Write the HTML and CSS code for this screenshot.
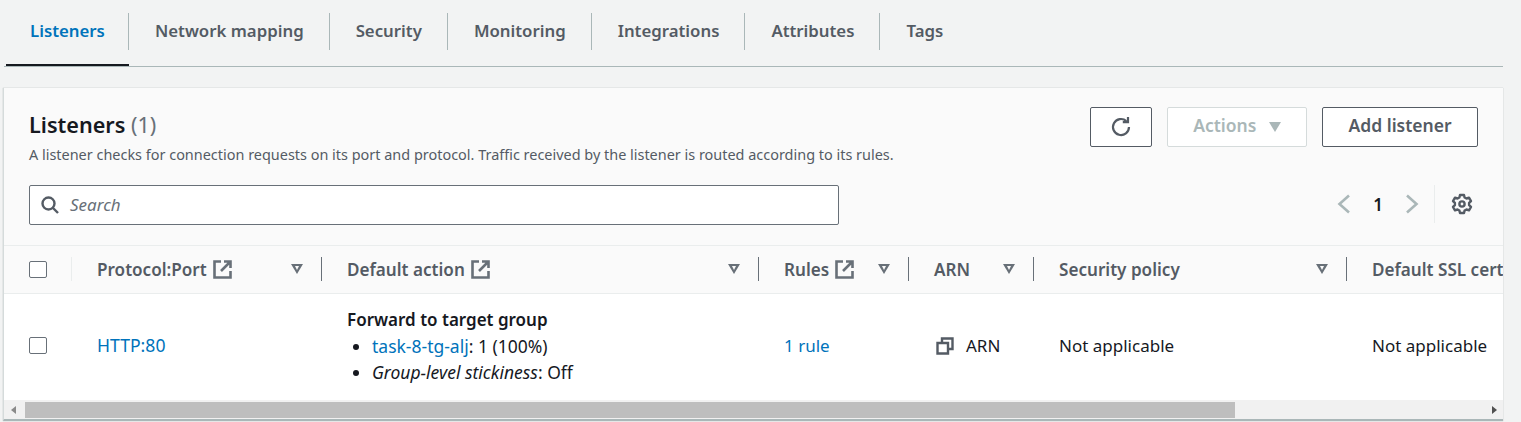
FILE: index.html
```html
<!DOCTYPE html>
<html lang="en">
<head>
    <meta charset="UTF-8">
    <title>Listeners</title>
    <link rel="stylesheet" href="styles.css">
</head>
<body>
    <!-- tabs -->
    <nav class="tabs">
        <a class="tab tab-active">Listeners</a>
        <a class="tab">Network mapping</a>
        <a class="tab">Security</a>
        <a class="tab">Monitoring</a>
        <a class="tab">Integrations</a>
        <a class="tab">Attributes</a>
        <a class="tab tab-last">Tags</a>
    </nav>

    <section class="panel">
        <header class="panel-head">
            <div class="panel-title">
                <h2>Listeners <span class="count">(1)</span></h2>
                <p>A listener checks for connection requests on its port and protocol. Traffic received by the listener is routed according to its rules.</p>
            </div>
            <div class="panel-actions">
                <button class="btn btn-icon" aria-label="Refresh">
                    <svg width="22" height="22" viewBox="0 0 22 22" fill="none" stroke="#545b64" stroke-width="2.2"><path d="M19 11a8 8 0 1 1-2.6-5.9"/><path d="M18 1v5.2h-5.2"/></svg>
                </button>
                <button class="btn btn-disabled">Actions <span class="caret"></span></button>
                <button class="btn btn-add">Add listener</button>
            </div>
        </header>

        <div class="tools">
            <div class="search">
                <svg width="18" height="18" viewBox="0 0 18 18" fill="none" stroke="#545b64" stroke-width="2.4"><circle cx="7.5" cy="7.5" r="6"/><path d="M12 12l5 5"/></svg>
                <span>Search</span>
            </div>
            <div class="pager">
                <svg width="14" height="20" viewBox="0 0 14 20" fill="none" stroke="#aab7b8" stroke-width="2.6"><path d="M12 1.5L2.5 10l9.5 8.500"/></svg>
                <span class="page-num">1</span>
                <svg width="14" height="20" viewBox="0 0 14 20" fill="none" stroke="#aab7b8" stroke-width="2.6"><path d="M2 1.500L11.500 10 2 18.500"/></svg>
                <span class="pager-sep"></span>
                <svg width="22" height="22" viewBox="0 0 22 22" fill="none" stroke="#545b64" stroke-width="2.4" stroke-linejoin="round"><path d="M9 2h4l.6 2.500 1.900 1 2.500-.8 2 3.400-1.900 1.800v2.200l1.900 1.800-2 3.400-2.500-.8-1.900 1-.6 2.500H9l-.6-2.500-1.900-1-2.500.8-2-3.400 1.900-1.800V9.900L2 8.100l2-3.400 2.500.8 1.900-1z"/><circle cx="11" cy="11" r="2.600"/></svg>
            </div>
        </div>

        <div class="table-wrap">
            <table class="grid">
                <colgroup>
                    <col class="c-check"><col class="c-proto"><col class="c-action"><col class="c-rules"><col class="c-arn"><col class="c-policy"><col class="c-ssl">
                </colgroup>
                <thead>
                    <tr>
                        <th><span class="cell-th first"><span class="check"></span></span></th>
                        <th><span class="cell-th"><span class="th-label">Protocol:Port <svg class="ext" width="19" height="19" viewBox="0 0 19 19" fill="none" stroke="#687078" stroke-width="2.600"><path d="M8 1.500H1.500v16h16V11"/><path d="M11 1.500h6.500V8M17 2L8 11"/></svg></span><span class="sort"></span></span></th>
                        <th><span class="cell-th"><span class="th-label">Default action <svg class="ext" width="19" height="19" viewBox="0 0 19 19" fill="none" stroke="#687078" stroke-width="2.600"><path d="M8 1.500H1.500v16h16V11"/><path d="M11 1.500h6.500V8M17 2L8 11"/></svg></span><span class="sort"></span></span></th>
                        <th><span class="cell-th"><span class="th-label">Rules <svg class="ext" width="19" height="19" viewBox="0 0 19 19" fill="none" stroke="#687078" stroke-width="2.600"><path d="M8 1.500H1.500v16h16V11"/><path d="M11 1.500h6.500V8M17 2L8 11"/></svg></span><span class="sort"></span></span></th>
                        <th><span class="cell-th"><span class="th-label">ARN</span><span class="sort"></span></span></th>
                        <th><span class="cell-th"><span class="th-label">Security policy</span><span class="sort"></span></span></th>
                        <th><span class="cell-th last"><span class="th-label">Default SSL certificate</span></span></th>
                    </tr>
                </thead>
                <tbody>
                    <tr>
                        <td class="td-check"><span class="check"></span></td>
                        <td><a class="link link-wide">HTTP:80</a></td>
                        <td>
                            <strong>Forward to target group</strong>
                            <ul>
                                <li><a class="link">task-8-tg-alj</a>: 1 (100%)</li>
                                <li><em>Group-level stickiness</em>: Off</li>
                            </ul>
                        </td>
                        <td><a class="link">1 rule</a></td>
                        <td><span class="arn"><svg width="18" height="18" viewBox="0 0 18 18" fill="none" stroke="#545b64" stroke-width="2.400"><path d="M1.500 6h10.500v10.500H1.500z"/><path d="M6 5V1.500h10.500V12H13"/></svg>ARN</span></td>
                        <td>Not applicable</td>
                        <td>Not applicable</td>
                    </tr>
                </tbody>
            </table>
        </div>

        <!-- scrollbar -->
        <div class="scrollbar">
            <span class="arrow arrow-left"></span>
            <span class="thumb"></span>
            <span class="arrow arrow-right"></span>
        </div>
    </section>
</body>
</html>
```

FILE: styles.css
```css
/* page */
* {
    box-sizing: border-box;
}

body {
    margin: 0;
    padding: 0 18px 0 4px;
    height: 422px;
    overflow: hidden;
    background-color: #f2f3f3;
    color: #16191f;
    font-family: "Noto Sans", Arial, sans-serif;
    font-size: 17px;
}

/* tabs */
.tabs {
    display: flex;
    height: 67px;
    padding: 0 0 0 2px;
    border-bottom: 1px solid #aab7b8;
}

.tab {
    position: relative;
    height: 66px;
    padding: 13px 26px 0 26px;
    color: #545b64;
    font-size: 16.8px;
    font-weight: 600;
    line-height: 36px;
}

.tab::after {
    content: "";
    position: absolute;
    right: 0;
    top: 13px;
    height: 37px;
    border-right: 1px solid #aab7b8;
}

.tab-last::after {
    display: none;
}

.tab-active {
    width: 123px;
    padding-left: 24px;
    padding-right: 0;
    color: #0073bb;
    border-bottom: 2px solid #16191f;
}

/* panel */
.panel {
    margin: 21px 0 0 -1px;
    height: 333px;
    background-color: #fafafa;
    border-left: 1px solid #d5dbdb;
    border-bottom: 2px solid #aab7b8;
    box-shadow: 0 0 1px rgba(0, 28, 36, 0.3);
}

.panel-head {
    display: flex;
    justify-content: space-between;
    padding: 19px 25px 0 25px;
    height: 97px;
}

.panel-title h2 {
    margin: 3px 0 0;
    font-size: 21.6px;
    font-weight: 600;
    line-height: 30px;
}

.count {
    color: #687078;
    font-weight: 400;
}

.panel-title p {
    margin: 5px 0 0;
    color: #545b64;
    font-size: 14.45px;
    line-height: 20px;
    white-space: nowrap;
}

.panel-actions {
    display: flex;
    gap: 15px;
}

.btn {
    height: 40px;
    border: 1px solid #545b64;
    border-radius: 2px;
    background-color: #fff;
    color: #545b64;
    font-family: inherit;
    font-size: 17.5px;
    font-weight: 600;
    line-height: 34px;
    padding: 0 0 4px;
}

.btn-icon {
    width: 62px;
    padding: 0;
}

.btn-icon svg {
    display: block;
    margin: 0 auto;
}

.btn-disabled {
    width: 140px;
    border-color: #d5dbdb;
    color: #aab7b8;
}

.caret {
    display: inline-block;
    margin-left: 8px;
    border-left: 6.5px solid transparent;
    border-right: 6.5px solid transparent;
    border-top: 10px solid #aab7b8;
}

.btn-add {
    width: 156px;
}

/* search row */
.tools {
    display: flex;
    justify-content: space-between;
    align-items: flex-start;
    height: 60px;
    padding: 0 30px 0 25px;
}

.search {
    display: flex;
    align-items: center;
    gap: 11px;
    width: 810px;
    height: 40px;
    padding-left: 11px;
    border: 1px solid #687078;
    border-radius: 2px;
    background-color: #fff;
    color: #687078;
    font-style: italic;
    font-size: 17px;
}

.search span {
    position: relative;
    top: -1px;
}

.pager {
    display: flex;
    align-items: center;
    height: 38px;
}

.page-num {
    margin: 0 22px 0 22px;
    font-size: 17px;
    font-weight: 600;
}

.pager-sep {
    height: 38px;
    margin: 0 16px 0 15px;
    border-left: 1px solid #eaeded;
}

/* table */
.table-wrap {
    overflow: hidden;
    height: 155px;
    border-top: 1px solid #eaeded;
    background-color: #fff;
}

.grid {
    table-layout: fixed;
    width: 1660px;
    border-collapse: collapse;
}

.c-check { width: 68px; }
.c-proto { width: 250px; }
.c-action { width: 437px; }
.c-rules { width: 150px; }
.c-arn { width: 125px; }
.c-policy { width: 313px; }
.c-ssl { width: 317px; }

th {
    height: 47px;
    padding: 0;
    background-color: #fafafa;
    border-bottom: 1px solid #eaeded;
    color: #545b64;
    font-size: 17.1px;
    font-weight: 600;
    text-align: left;
}

.cell-th {
    display: flex;
    align-items: center;
    justify-content: space-between;
    height: 24px;
    padding: 0 18px 0 25px;
    border-right: 1px solid #687078;
    white-space: nowrap;
}

.cell-th.first {
    padding-left: 25px;
    border-right-color: #eaeded;
}

.cell-th.last {
    border-right: none;
}

.th-label {
    display: flex;
    align-items: center;
    gap: 6px;
}

.ext {
    display: block;
}

/* triangle with a small hole, sort indicator */
.sort {
    width: 0;
    height: 0;
    position: relative;
    border-left: 6.5px solid transparent;
    border-right: 6.5px solid transparent;
    border-top: 10px solid #687078;
}

.sort::after {
    content: "";
    position: absolute;
    left: -2.5px;
    top: -8px;
    border-left: 2.5px solid transparent;
    border-right: 2.5px solid transparent;
    border-top: 4px solid #fafafa;
}

td {
    height: 107px;
    padding: 0 0 2px 25px;
    vertical-align: middle;
    line-height: 26px;
    white-space: nowrap;
}

strong {
    font-weight: 600;
}

td ul {
    margin: 0;
    padding-left: 25px;
    font-size: 17.5px;
}

.link {
    color: #0073bb;
}

.link-wide {
    font-size: 17.6px;
}

.check {
    display: block;
    width: 18px;
    height: 17px;
    border: 1px solid #687078;
    border-radius: 2px;
    background-color: #fff;
}

.arn {
    display: flex;
    align-items: center;
    gap: 12px;
    margin-left: 2px;
}

/* scrollbar */
.scrollbar {
    display: flex;
    align-items: center;
    height: 19px;
    background-color: #f1f1f1;
}

.arrow {
    width: 0;
    height: 0;
    border-top: 4px solid transparent;
    border-bottom: 4px solid transparent;
}

.arrow-left {
    margin: 0 9px 0 7px;
    border-right: 5px solid #8a8a8a;
}

.thumb {
    width: 1210px;
    height: 16px;
    background-color: #bebebe;
}

.arrow-right {
    margin-left: auto;
    margin-right: 6px;
    border-left: 5px solid #505050;
}
```
